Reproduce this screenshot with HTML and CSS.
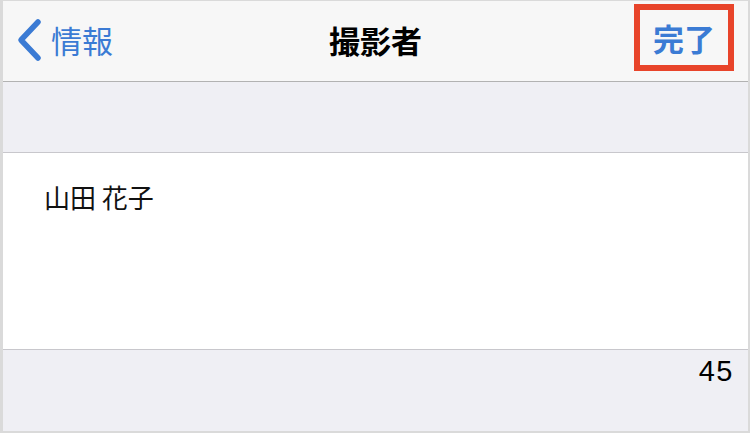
FILE: index.html
```html
<!DOCTYPE html>
<html lang="ja">
<head>
<meta charset="utf-8">
<link rel="stylesheet" href="styles.css">
</head>
<body>
<div class="screen">
  <header class="navbar">
    <div class="nav-left">
      <svg class="chevron" width="26" height="44" viewBox="0 0 26 44"><path d="M22 4 L5 22 L22 40" fill="none" stroke="#3b7bd4" stroke-width="5.5" stroke-linecap="round" stroke-linejoin="round"/></svg>
      <span class="back-label">情報</span>
    </div>
    <div class="nav-title">撮影者</div>
    <div class="nav-right">
      <span class="done">完了</span>
    </div>
  </header>
  <div class="group-gap"></div>
  <div class="cell">
    <div class="name">山田 花子</div>
  </div>
  <footer class="footer">
    <span class="count">45</span>
  </footer>
</div>
</body>
</html>
```
FILE: styles.css
```css
html, body {
  margin: 0;
  padding: 0;
  background: #ffffff;
}
.screen {
  width: 750px;
  height: 433px;
  box-sizing: border-box;
  border-style: solid;
  border-color: #dadada;
  border-width: 1px 2px 2px 3px;
  display: flex;
  flex-direction: column;
  font-family: "Noto Sans CJK JP", "Noto Sans", sans-serif;
  overflow: hidden;
}
.navbar {
  height: 80px;
  flex: none;
  background: #f7f7f7;
  border-bottom: 1px solid #b2b2b2;
  display: grid;
  grid-template-columns: 1fr auto 1fr;
  align-items: center;
}
.nav-left {
  display: flex;
  align-items: center;
  padding-left: 13px;
  gap: 9px;
}
.chevron {
  display: block;
  margin-top: -3px;
}
.back-label {
  color: #3b7bd4;
  font-size: 31px;
  line-height: 1;
  margin-top: -4px;
}
.nav-title {
  font-size: 31px;
  font-weight: 700;
  color: #000;
  line-height: 1;
  margin-top: -4px;
}
.nav-right {
  display: flex;
  justify-content: flex-end;
  padding-right: 14px;
  align-self: start;
  padding-top: 3px;
}
.done {
  display: block;
  box-sizing: border-box;
  width: 100px;
  height: 67px;
  border: 6px solid #e8442a;
  color: #3b7bd4;
  font-size: 31px;
  font-weight: 700;
  line-height: 1;
  text-align: center;
  padding-top: 12px;
}
.group-gap {
  height: 70px;
  flex: none;
  background: #efeff4;
  border-bottom: 1px solid #c8c7cc;
}
.cell {
  flex: none;
  height: 197px;
  background: #ffffff;
  border-bottom: 1px solid #c8c7cc;
  padding: 27px 0 0 41px;
  box-sizing: border-box;
}
.name {
  font-size: 26px;
  line-height: 34px;
  color: #111;
}
.footer {
  flex: 1;
  background: #efeff4;
  display: flex;
  justify-content: flex-end;
  align-items: flex-start;
  padding: 4px 14px 0 0;
}
.count {
  font-family: "Liberation Sans", Arial, sans-serif;
  font-size: 29px;
  letter-spacing: 1.5px;
  color: #000;
  line-height: 34px;
}
```
